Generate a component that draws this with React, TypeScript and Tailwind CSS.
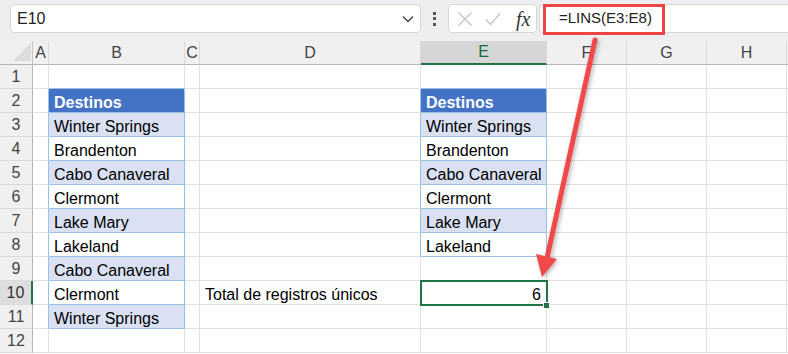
import React from "react";

const COLS = ["A", "B", "C", "D", "E", "F", "G", "H", ""];

type CellInfo = { text?: string; kind?: "head" | "band" | "plain" | "none"; align?: "right" };

function getCell(col: string, row: number): CellInfo {
  const listB = ["Destinos", "Winter Springs", "Brandenton", "Cabo Canaveral", "Clermont", "Lake Mary", "Lakeland", "Cabo Canaveral", "Clermont", "Winter Springs"];
  const listE = ["Destinos", "Winter Springs", "Brandenton", "Cabo Canaveral", "Clermont", "Lake Mary", "Lakeland"];
  if (col === "B" && row >= 2 && row <= 11) {
    const i = row - 2;
    return { text: listB[i], kind: i === 0 ? "head" : i % 2 === 1 ? "band" : "plain" };
  }
  if (col === "E" && row >= 2 && row <= 8) {
    const i = row - 2;
    return { text: listE[i], kind: i === 0 ? "head" : i % 2 === 1 ? "band" : "plain" };
  }
  if (col === "D" && row === 10) return { text: "Total de registros únicos" };
  if (col === "E" && row === 10) return { text: "6", align: "right" };
  return {};
}

function rightBlue(col: string, row: number) {
  if ((col === "A" || col === "B") && row >= 2 && row <= 11) return true;
  if ((col === "D" || col === "E") && row >= 2 && row <= 8) return true;
  return false;
}
function bottomBlue(col: string, row: number) {
  if (col === "B" && row >= 1 && row <= 11) return true;
  if (col === "E" && row >= 1 && row <= 8) return true;
  return false;
}

function Cell({ col, row }: { col: string; row: number }) {
  const info = getCell(col, row);
  const rb = rightBlue(col, row) ? "border-r-[#9bc2e6]" : "border-r-[#e1e1e1]";
  const bb = bottomBlue(col, row) ? "border-b-[#9bc2e6]" : "border-b-[#e1e1e1]";
  let bg = "bg-white";
  let txt = "text-black";
  if (info.kind === "head") {
    bg = "bg-[#4472c4]";
    txt = "text-white font-bold";
  } else if (info.kind === "band") {
    bg = "bg-[#d9e1f2]";
  }
  const selected = col === "E" && row === 10;
  return (
    <div
      className={`relative h-[24px] border-r border-b ${rb} ${bb} ${bg} ${txt} flex items-end ${
        info.align === "right" ? "justify-end pr-[5px]" : "pl-[5px]"
      } text-[16px] leading-[18px] whitespace-nowrap ${selected ? "z-10" : ""}`}
    >
      {info.text}
      {selected && (
        <>
          <div className="absolute -left-[1px] -top-[1px] -right-[2px] -bottom-[2px] border-2 border-[#217346]" />
          <div className="absolute -right-[4px] -bottom-[5px] w-[7px] h-[7px] bg-[#217346] border border-white" />
        </>
      )}
    </div>
  );
}

export default function App() {
  const rows = Array.from({ length: 12 }, (_, i) => i + 1);
  return (
    <div
      className="relative w-[788px] h-[354px] overflow-hidden bg-white text-[#222]"
      style={{ fontFamily: '"Liberation Sans", Arial, sans-serif' }}
    >
      {/* Formula bar */}
      <div className="h-[41px] bg-[#eeeef1] flex items-start pt-[4px] pl-[10px]">
        <div className="w-[411px] h-[29px] bg-white border border-[#d6d6da] rounded-[4px] flex items-center justify-between pl-[6px] pr-[6px]">
          <span className="text-[16px] text-[#222]">E10</span>
          <svg width="12" height="8" viewBox="0 0 12 8">
            <path d="M1 1.5 L6 6.5 L11 1.5" fill="none" stroke="#444" strokeWidth="1.4" />
          </svg>
        </div>
        <div className="w-[27px] h-[29px] flex flex-col items-center justify-center gap-[2.5px]">
          <div className="w-[3px] h-[3px] bg-[#555]" />
          <div className="w-[3px] h-[3px] bg-[#555]" />
          <div className="w-[3px] h-[3px] bg-[#555]" />
        </div>
        <div className="w-[89px] h-[29px] bg-white border border-[#d6d6da] rounded-[4px] flex items-center pl-[8px] gap-[12px]">
          <svg width="16" height="16" viewBox="0 0 16 16">
            <path d="M1.5 1.5 L14.5 14.5 M14.5 1.5 L1.5 14.5" stroke="#c4c4c4" strokeWidth="1.3" fill="none" />
          </svg>
          <svg width="16" height="14" viewBox="0 0 16 14">
            <path d="M1 7.5 L5.5 12.5 L15 1.5" stroke="#c4c4c4" strokeWidth="1.3" fill="none" />
          </svg>
          <span
            className="text-[20px] italic text-[#333] ml-[3px] leading-none"
            style={{ fontFamily: '"Liberation Serif", "Times New Roman", serif' }}
          >
            fx
          </span>
        </div>
        <div className="flex-1 ml-[2px] h-[29px] bg-white border border-[#d6d6da] border-r-0 rounded-l-[4px] flex items-center pl-[19px]">
          <span className="text-[15px] text-[#222]">=LINS(E3:E8)</span>
        </div>
      </div>

      {/* Grid */}
      <div className="grid grid-cols-[33px_16px_136px_15px_221px_126px_80px_80px_80px_1fr]">
        <div className="h-[24px] bg-[#f0f0f0] border-r border-b border-r-[#c8c8c8] border-b-[#b5b5b5] flex items-end justify-end pr-[1px] pb-[3px]">
          <svg width="18" height="18" viewBox="0 0 18 18">
            <path d="M18 0 L18 18 L0 18 Z" fill="#dcdcdc" />
          </svg>
        </div>
        {COLS.map((c, i) => {
          const sel = c === "E";
          return (
            <div
              key={"h" + i}
              className={`h-[24px] border-r border-r-[#dadada] flex items-center justify-center text-[16px] ${
                sel
                  ? "bg-[#d6d6d6] border-b-2 border-b-[#217346] text-[#1a6b3c]"
                  : "bg-[#f0f0f0] border-b border-b-[#b5b5b5] text-[#444]"
              }`}
            >
              {c}
            </div>
          );
        })}
        {rows.map((r) => (
          <React.Fragment key={r}>
            <div
              className={`h-[24px] border-b border-b-[#dadada] flex items-center justify-center text-[16px] ${
                r === 10
                  ? "bg-[#dedede] border-r-2 border-r-[#217346] text-[#333]"
                  : "bg-[#f0f0f0] border-r border-r-[#b5b5b5] text-[#444]"
              }`}
            >
              {r}
            </div>
            {COLS.map((c, i) => (
              <Cell key={r + "-" + i} col={c} row={r} />
            ))}
          </React.Fragment>
        ))}
      </div>

      {/* Annotation: red box */}
      <div className="absolute left-[543px] top-[4px] w-[122px] h-[31px] border-[3px] border-[#ee4444] pointer-events-none z-20" />

      {/* Annotation: arrow */}
      <svg className="absolute left-0 top-0 pointer-events-none z-20" width="788" height="354" viewBox="0 0 788 354">
        <defs>
          <filter id="sh" x="-20%" y="-20%" width="140%" height="140%">
            <feDropShadow dx="1.5" dy="1.5" stdDeviation="2" floodColor="#000" floodOpacity="0.3" />
          </filter>
        </defs>
        <g filter="url(#sh)">
          <line x1="595" y1="40" x2="547" y2="258" stroke="#f0484a" strokeWidth="5" strokeLinecap="round" />
          <polygon points="542,277 536,254 557,259" fill="#f0484a" />
        </g>
      </svg>
    </div>
  );
}
